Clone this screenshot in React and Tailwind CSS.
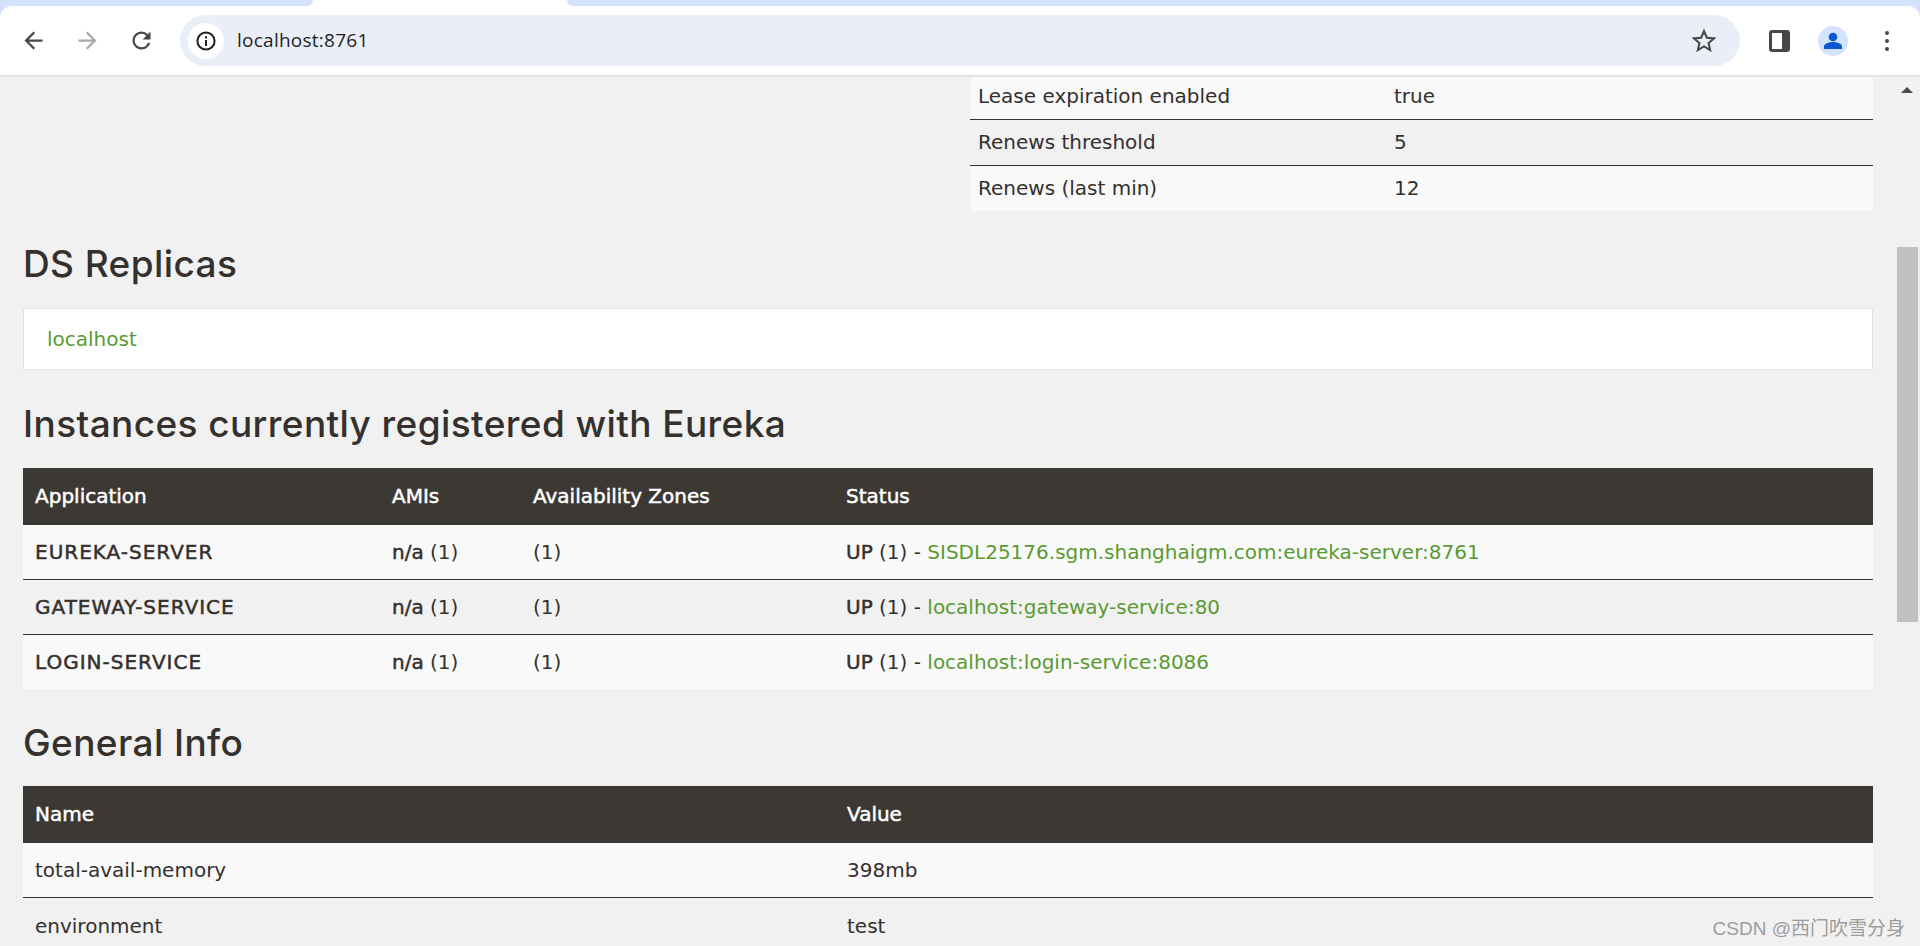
import React from "react";

const FONT = "font-['DejaVu_Sans','Open_Sans',sans-serif]";
const HEAD = "font-['Inter','Open_Sans',sans-serif]";
const BOLD = "[-webkit-text-stroke:0.5px_currentColor]";

function Back({ color }) {
  return (
    <svg width="27" height="27" viewBox="0 0 24 24" fill={color}>
      <path d="M20 11H7.83l5.59-5.59L12 4l-8 8 8 8 1.41-1.41L7.83 13H20v-2z" />
    </svg>
  );
}

function Forward({ color }) {
  return (
    <svg width="27" height="27" viewBox="0 0 24 24" fill={color}>
      <path d="M12 4l-1.41 1.41L16.17 11H4v2h12.17l-5.58 5.59L12 20l8-8z" />
    </svg>
  );
}

function Toolbar() {
  return (
    <div className="shrink-0 bg-[#d3e3fd]">
      <div className="h-[6px] flex bg-white">
        <div className="w-[313px] bg-[#d3e3fd] rounded-br-[8px]" />
        <div className="w-[254px]" />
        <div className="flex-1 bg-[#d3e3fd] rounded-bl-[8px]" />
      </div>
      <div className="h-[69px] bg-white rounded-t-[12px] flex items-center pl-[20px]">
        <div className="w-[54px] flex justify-start"><Back color="#474747" /></div>
        <div className="w-[54px] flex justify-start"><Forward color="#a9a9a9" /></div>
        <div className="w-[52px] flex justify-start">
          <svg width="27" height="27" viewBox="0 0 24 24" fill="#474747">
            <path d="M17.65 6.35A7.958 7.958 0 0 0 12 4c-4.42 0-7.99 3.58-7.99 8s3.57 8 7.99 8c3.73 0 6.84-2.55 7.73-6h-2.08A5.99 5.99 0 0 1 12 18c-3.31 0-6-2.69-6-6s2.69-6 6-6c1.66 0 3.14.69 4.22 1.78L13 11h7V4l-2.35 2.35z" />
          </svg>
        </div>
        <div className="w-[1560px] h-[51px] rounded-full bg-[#eaeef8] flex items-center pl-[8px] pr-[21px]">
          <div className="w-[36px] h-[36px] rounded-full bg-white flex items-center justify-center">
            <svg width="22" height="22" viewBox="0 0 22 22" fill="none">
              <circle cx="11" cy="11" r="8.6" stroke="#1f1f1f" strokeWidth="2" />
              <rect x="10" y="10" width="2" height="6" fill="#1f1f1f" />
              <rect x="10" y="6.2" width="2" height="2.2" fill="#1f1f1f" />
            </svg>
          </div>
          <span className="ml-[13px] text-[19px] tracking-[0.25px] text-[#1f1f1f] font-['Open_Sans',sans-serif]">localhost:8761</span>
          <div className="ml-auto">
            <svg width="30" height="30" viewBox="0 0 24 24" fill="#474747">
              <path d="M22 9.24l-7.19-.62L12 2 9.19 8.63 2 9.24l5.46 4.73L5.82 21 12 17.27 18.18 21l-1.63-7.03L22 9.24zM12 15.4l-3.76 2.27 1-4.28-3.32-2.88 4.38-.38L12 6.1l1.71 4.04 4.38.38-3.32 2.88 1 4.28L12 15.4z" />
            </svg>
          </div>
        </div>
        <div className="ml-[29px] w-[21px] h-[22px] rounded-[3px] bg-[#474747] flex items-center pl-[3px]">
          <div className="w-[10px] h-[16px] bg-white" />
        </div>
        <div className="ml-[28px] w-[30px] h-[30px] rounded-full bg-[#d3e3fd] flex items-center justify-center">
          <svg width="20" height="20" viewBox="0 0 20 20" fill="#0b57d0">
            <circle cx="10" cy="6" r="4.3" />
            <path d="M1 18v-2.4C1 12.6 6 11 10 11s9 1.6 9 4.6V18z" />
          </svg>
        </div>
        <div className="ml-[37px] flex flex-col gap-[4px]">
          <div className="w-[4px] h-[4px] rounded-full bg-[#474747]" />
          <div className="w-[4px] h-[4px] rounded-full bg-[#474747]" />
          <div className="w-[4px] h-[4px] rounded-full bg-[#474747]" />
        </div>
      </div>
      <div className="h-[2px] bg-[#e3e3e3]" />
    </div>
  );
}

function Link({ children }) {
  return <span className="text-[#5a9a32]">{children}</span>;
}

function Heading({ children, className }) {
  return (
    <h2 className={`${HEAD} text-[37px] leading-[40px] font-medium tracking-[0.4px] text-[#34302d] ${className}`}>
      {children}
    </h2>
  );
}

function Row({ last, alt, children, h = "h-[55px]" }) {
  return (
    <div className={`flex items-center ${h} ${alt ? "bg-[#f1f1f1]" : "bg-[#f9f9f9]"} ${last ? "" : "border-b border-[#34302d]"}`}>
      {children}
    </div>
  );
}

function Up({ children }) {
  return (
    <>
      <b className={`font-normal ${BOLD}`}>UP</b> (1) - <Link>{children}</Link>
    </>
  );
}

function Instance({ name, href, alt, last, h }) {
  return (
    <Row alt={alt} last={last} h={h}>
      <div className={`w-[369px] pl-[12px] tracking-[1px] ${BOLD}`}>{name}</div>
      <div className="w-[141px]"><b className={`font-normal ${BOLD}`}>n/a</b> (1)</div>
      <div className="w-[313px]">(1)</div>
      <div className="flex-1"><Up>{href}</Up></div>
    </Row>
  );
}

export default function App() {
  return (
    <div className={`h-screen w-full overflow-hidden flex flex-col bg-[#f1f1f1] text-[20px] text-[#34302d] ${FONT}`}>
      <Toolbar />
      <div className="flex-1 min-h-0 flex">
        <main className="flex-1 min-w-0 overflow-hidden pl-[23px] pr-[24px]">
          <div className="ml-[947px]">
            <div className="flex items-center h-[43px] pb-[5px] bg-[#f9f9f9] border-b border-[#34302d]">
              <div className="w-[424px] pl-[8px]">Lease expiration enabled</div>
              <div>true</div>
            </div>
            <div className="flex items-center h-[46px] pb-[2px] border-b border-[#34302d]">
              <div className="w-[424px] pl-[8px]">Renews threshold</div>
              <div>5</div>
            </div>
            <div className="flex items-center h-[45px] pb-[2px] bg-[#f9f9f9]">
              <div className="w-[424px] pl-[8px]">Renews (last min)</div>
              <div>12</div>
            </div>
          </div>

          <Heading className="mt-[33px] mb-[24px]">DS Replicas</Heading>
          <div className="h-[62px] bg-white border border-[#e1e1e1] flex items-center pl-[23px]">
            <Link>localhost</Link>
          </div>

          <Heading className="mt-[34px] mb-[24px]">Instances currently registered with Eureka</Heading>
          <div>
            <div className={`flex items-center h-[57px] pb-[2px] bg-[#3c3834] text-white ${BOLD}`}>
              <div className="w-[369px] pl-[12px]">Application</div>
              <div className="w-[141px]">AMIs</div>
              <div className="w-[313px]">Availability Zones</div>
              <div className="flex-1">Status</div>
            </div>
            <Instance name="EUREKA-SERVER" href="SISDL25176.sgm.shanghaigm.com:eureka-server:8761" />
            <Instance name="GATEWAY-SERVICE" href="localhost:gateway-service:80" alt />
            <Instance name="LOGIN-SERVICE" href="localhost:login-service:8086" last h="h-[54px]" />
          </div>

          <Heading className="mt-[34px] mb-[23px]">General Info</Heading>
          <div>
            <div className={`flex items-center h-[57px] pb-[2px] bg-[#3c3834] text-white ${BOLD}`}>
              <div className="w-[824px] pl-[12px]">Name</div>
              <div className="flex-1">Value</div>
            </div>
            <Row>
              <div className="w-[824px] pl-[12px]">total-avail-memory</div>
              <div className="flex-1">398mb</div>
            </Row>
            <Row alt last>
              <div className="w-[824px] pl-[12px]">environment</div>
              <div className="flex-1">test</div>
            </Row>
          </div>
        </main>
        <aside className="w-[23px] shrink-0 flex flex-col">
          <div className="mt-[10px] ml-[4px] w-0 h-0 border-l-[6px] border-r-[6px] border-b-[6px] border-l-transparent border-r-transparent border-b-[#4b4b4b]" />
          <div className="mt-[154px] w-[21px] h-[375px] bg-[#c1c1c1]" />
        </aside>
      </div>
      <div className="absolute right-[15px] bottom-[6px] text-[19px] leading-[22px] text-[#9d9d9d] font-['Liberation_Sans','Noto_Sans_CJK_SC',sans-serif]">
        CSDN @西门吹雪分身
      </div>
    </div>
  );
}
